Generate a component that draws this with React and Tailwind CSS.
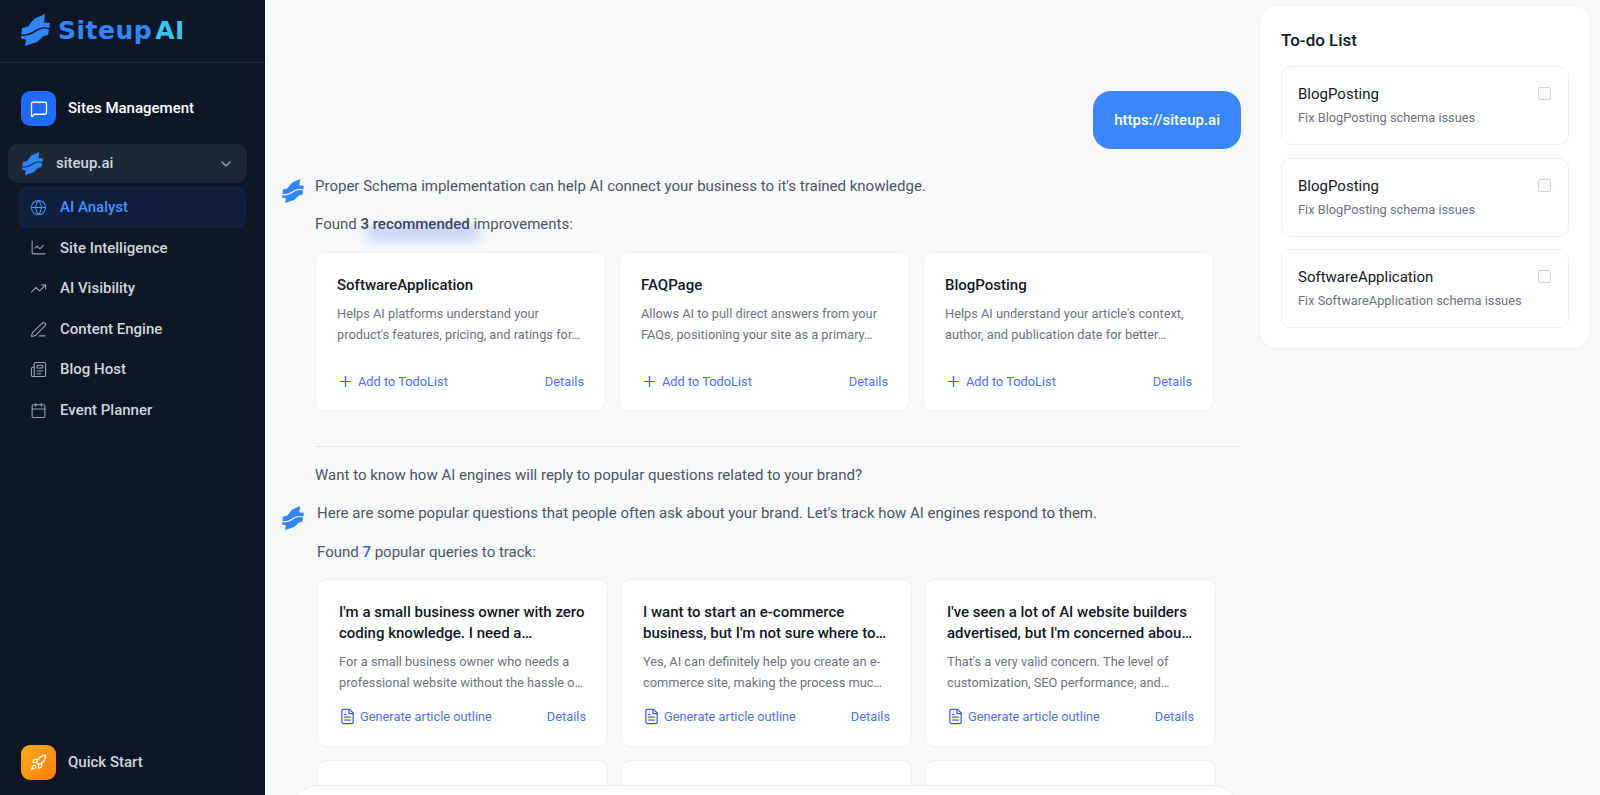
import { MessageSquare, Globe, ChartLine, TrendingUp, PenLine, Newspaper, Calendar, ChevronDown, Rocket, Plus, FileText } from "lucide-react";

function LogoMark({ className }) {
  return (
    <svg viewBox="0 0 29 32" className={className} fill="#2f86ff">
      <path d="M0.3 20.4 L1 14 L7 12.5 L13 5 L24 0 L23 8.5 L29 9 L28.3 14 C24 12.6 19 13 15 15.8 C11 18.6 6 20.8 0.3 20.4 Z" />
      <path d="M0.2 21.8 C6 22.3 11 20.3 15.5 17.2 C19.5 14.5 24 13.8 28 15.4 L27 21 L22.5 22 L16 28 L4 32 L5 25.5 L0 24.5 Z" />
    </svg>
  );
}

const navItems = [
  { label: "AI Analyst", icon: Globe, active: true },
  { label: "Site Intelligence", icon: ChartLine },
  { label: "AI Visibility", icon: TrendingUp },
  { label: "Content Engine", icon: PenLine },
  { label: "Blog Host", icon: Newspaper },
  { label: "Event Planner", icon: Calendar },
];

const improvements = [
  { title: "SoftwareApplication", text: "Helps AI platforms understand your product's features, pricing, and ratings for…" },
  { title: "FAQPage", text: "Allows AI to pull direct answers from your FAQs, positioning your site as a primary…" },
  { title: "BlogPosting", text: "Helps AI understand your article's context, author, and publication date for better…" },
];

const queries = [
  { title: "I'm a small business owner with zero coding knowledge. I need a…", text: "For a small business owner who needs a professional website without the hassle o…" },
  { title: "I want to start an e-commerce business, but I'm not sure where to…", text: "Yes, AI can definitely help you create an e-commerce site, making the process muc…" },
  { title: "I've seen a lot of AI website builders advertised, but I'm concerned abou…", text: "That's a very valid concern. The level of customization, SEO performance, and…" },
];

const todos = [
  { title: "BlogPosting", text: "Fix BlogPosting schema issues" },
  { title: "BlogPosting", text: "Fix BlogPosting schema issues" },
  { title: "SoftwareApplication", text: "Fix SoftwareApplication schema issues" },
];

function Sidebar() {
  return (
    <aside className="w-[265px] shrink-0 h-full bg-[#0f1726] flex flex-col">
      <div className="h-[63px] shrink-0 border-b border-[#1c2534] pl-[21px] flex items-center gap-[8px] pb-[2px]">
        <LogoMark className="w-[29px] h-[32px]" />
        <span className="flex gap-[3px] text-[25px] tracking-[0.5px] font-bold leading-none [font-family:'DejaVu_Sans',sans-serif]">
          <span className="text-[#2f86ff]">Siteup</span>
          <span className="text-[#3cc3ee]">AI</span>
        </span>
      </div>

      <div className="flex items-center gap-[12px] pl-[21px] mt-[28px]">
        <div className="w-[35px] h-[35px] rounded-[9px] bg-[#1f6bff] flex items-center justify-center">
          <MessageSquare className="w-[18px] h-[18px] text-white" strokeWidth={1.75} />
        </div>
        <span className="text-[15px] font-medium text-white">Sites Management</span>
      </div>

      <div className="ml-[8px] mr-[18px] mt-[18px] h-[39px] rounded-[10px] bg-[#1e2735] flex items-center pl-[13px] pr-[13px]">
        <LogoMark className="w-[23px] h-[23px]" />
        <span className="ml-[12px] text-[15px] font-medium text-[#d1d5db] flex-1">siteup.ai</span>
        <ChevronDown className="w-[16px] h-[16px] text-[#9ca3af]" />
      </div>

      <nav className="mt-[4px] ml-[18px] mr-[18px] flex flex-col">
        {navItems.map((item) => (
          <div
            key={item.label}
            className={"h-[40.6px] rounded-[8px] flex items-center gap-[13px] pl-[12px] text-[15px] font-medium " + (item.active ? "bg-[#111f3f] text-[#4196f8]" : "text-[#d1d5db]")}
          >
            <item.icon className={"w-[17px] h-[17px] " + (item.active ? "text-[#4196f8]" : "text-[#9ca3af]")} strokeWidth={1.5} />
            {item.label}
          </div>
        ))}
      </nav>

      <div className="mt-auto mb-[15px] flex items-center gap-[12px] pl-[21px]">
        <div className="w-[35px] h-[35px] rounded-[9px] bg-gradient-to-br from-[#fdb01f] to-[#fd7a04] flex items-center justify-center">
          <Rocket className="w-[17px] h-[17px] text-white" strokeWidth={1.75} />
        </div>
        <span className="text-[15px] font-medium text-[#d1d5db]">Quick Start</span>
      </div>
    </aside>
  );
}

function Card({ title, text, icon: Icon, action, className }) {
  return (
    <div className={"w-[291px] rounded-[10px] bg-white border border-[#f0f1f4] px-[21px] flex flex-col " + className}>
      <div className="text-[15px] font-medium text-[#111827] leading-[21px]">{title}</div>
      <p className="mt-[7px] text-[12.8px] leading-[21px] text-[#6b7280]">{text}</p>
      <div className="mt-auto flex items-center justify-between text-[12.8px] text-[#4f6ef7]">
        <span className="flex items-center gap-[4px]">
          <Icon className="w-[17px] h-[17px] text-[#3b5bf0]" strokeWidth={1.75} />
          {action}
        </span>
        <span>Details</span>
      </div>
    </div>
  );
}

function Chat() {
  return (
    <main className="w-[994px] shrink-0 h-full overflow-hidden pl-[50px] relative">
      <div className="w-[926px]">
        <div className="flex justify-end pt-[91px]">
          <div className="h-[58px] px-[21px] rounded-[18px] bg-[#3a86ff] text-white text-[15px] font-medium flex items-center">https://siteup.ai</div>
        </div>

        <div className="relative mt-[26px] text-[15px] text-[#4b5563] leading-[22px]">
          <LogoMark className="absolute -left-[33px] top-[4px] w-[22px] h-[24px]" />
          <p>Proper Schema implementation can help AI connect your business to it's trained knowledge.</p>
          <p className="mt-[16px]">
            Found <span className="relative text-[#374151] font-medium">3 recommended<span className="absolute left-[6px] -right-[10px] top-[11px] h-[14px] rounded-full bg-[#3a6ff0]/30 blur-[6px]"></span></span> improvements:
          </p>
        </div>

        <div className="flex gap-[13px] mt-[17px]">
          {improvements.map((c) => (
            <Card key={c.title} {...c} icon={Plus} action="Add to TodoList" className="h-[159px] pt-[22px] pb-[19px]" />
          ))}
        </div>

        <div className="h-px bg-[#e5e7eb] mt-[35px]"></div>
        <p className="mt-[17px] text-[15px] text-[#4b5563] leading-[22px]">Want to know how AI engines will reply to popular questions related to your brand?</p>

        <div className="relative mt-[16px] pl-[2px] text-[15px] text-[#4b5563] leading-[22px]">
          <LogoMark className="absolute -left-[33px] top-[4px] w-[22px] h-[24px]" />
          <p>Here are some popular questions that people often ask about your brand. Let's track how AI engines respond to them.</p>
          <p className="mt-[17px]">Found <span className="text-[#3b5bf0] font-medium">7</span> popular queries to track:</p>
        </div>

        <div className="flex gap-[13px] mt-[16px] pl-[2px]">
          {queries.map((c) => (
            <Card key={c.title} {...c} icon={FileText} action="Generate article outline" className="h-[168px] pt-[22px] pb-[20px]" />
          ))}
        </div>
        <div className="flex gap-[13px] mt-[13px] pl-[2px]">
          {queries.map((c) => (
            <div key={c.title} className="w-[291px] h-[60px] rounded-[10px] bg-white border border-[#f0f1f4]"></div>
          ))}
        </div>
      </div>
      <div className="absolute left-[25px] top-[785px] w-[950px] h-[60px] rounded-t-[28px] bg-white border border-[#eceef1]"></div>
    </main>
  );
}

function TodoPanel() {
  return (
    <aside className="w-[332px] h-[344px] mt-[5px] rounded-[18px] bg-white border border-[#f0f1f4] pt-[22px] px-[21px]">
      <h2 className="text-[17px] font-medium text-[#111827] leading-[24px]">To-do List</h2>
      <div className="mt-[14px] flex flex-col gap-[12.6px]">
        {todos.map((t, i) => (
          <div key={i} className="h-[79px] rounded-[10px] border border-[#eef0f3] pl-[16px] pr-[17px] pt-[17px] flex justify-between">
            <div>
              <div className="text-[15px] text-[#111827] leading-[21px]">{t.title}</div>
              <div className="mt-[4px] text-[12.8px] text-[#6b7280] leading-[18px]">{t.text}</div>
            </div>
            <div className="w-[13px] h-[13px] mt-[3px] rounded-[2px] border border-[#d1d5db] bg-[#f9fafb]"></div>
          </div>
        ))}
      </div>
    </aside>
  );
}

export default function App() {
  return (
    <div className="h-screen w-full flex overflow-hidden bg-[#f7f8fa] [font-family:Roboto,sans-serif]">
      <Sidebar />
      <Chat />
      <TodoPanel />
    </div>
  );
}
